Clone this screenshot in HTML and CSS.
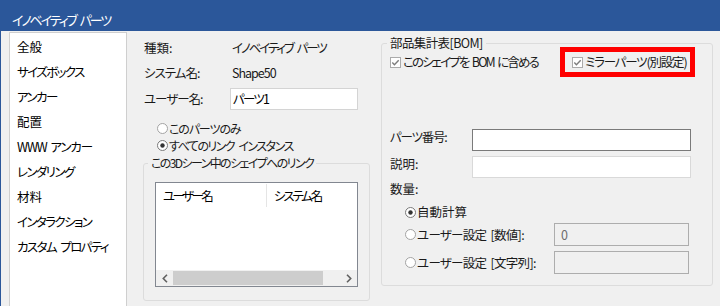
FILE: index.html
```html
<!DOCTYPE html>
<html lang="ja">
<head>
<meta charset="utf-8">
<link rel="stylesheet" href="styles.css">
</head>
<body>
<div class="window">
  <div class="titlebar">イノベイティブ パーツ</div>
  <div class="content">
    <ul class="nav">
      <li class="n">全般</li>
      <li class="k">サイズボックス</li>
      <li class="k">アンカー</li>
      <li class="n">配置</li>
      <li class="www">WWW アンカー</li>
      <li class="k">レンダリング</li>
      <li class="n">材料</li>
      <li class="k">インタラクション</li>
      <li class="k">カスタム プロパティ</li>
    </ul>
    <div class="main">
      <div class="leftcol">
        <div class="row r1"><span class="lbl n">種類:</span><span class="val kv">イノベイティブ パーツ</span></div>
        <div class="row r2"><span class="lbl">システム名:</span><span class="val">Shape50</span></div>
        <div class="row r3"><span class="lbl">ユーザー名:</span><span class="input name">パーツ1</span></div>
        <div class="radios">
          <div class="radio rr1"><svg class="rb" width="11" height="11" viewBox="0 0 11 11"><circle cx="5.5" cy="5.5" r="5" fill="#fff" stroke="#a3a3a3"/></svg><span class="ra">このパーツのみ</span></div>
          <div class="radio rr2"><svg class="rb" width="11" height="11" viewBox="0 0 11 11"><circle cx="5.5" cy="5.5" r="5" fill="#fff" stroke="#7a7a7a"/><circle cx="5.5" cy="5.5" r="2.2" fill="#333"/></svg><span class="rb2">すべてのリンク インスタンス</span></div>
        </div>
        <fieldset class="group links">
          <legend>この3Dシーン中のシェイプへのリンク</legend>
          <div class="listview">
            <div class="lvhead">
              <span class="col c1">ユーザー名</span>
              <span class="col c2">システム名</span>
            </div>
            <div class="lvbody"></div>
            <div class="hscroll">
              <span class="sbtn"><svg width="6" height="9" viewBox="0 0 6 9"><path d="M5 0.8 L1.3 4.5 L5 8.2" fill="none" stroke="#606060" stroke-width="1.6"/></svg></span>
              <span class="thumb"></span>
              <span class="track"></span>
              <span class="sbtn"><svg width="6" height="9" viewBox="0 0 6 9"><path d="M1 0.8 L4.7 4.5 L1 8.2" fill="none" stroke="#606060" stroke-width="1.6"/></svg></span>
            </div>
          </div>
        </fieldset>
      </div>
      <fieldset class="group bom">
        <legend class="bl">部品集計表[BOM]</legend>
        <div class="checkrow">
          <label class="check"><svg class="cb" width="11" height="11" viewBox="0 0 11 11"><rect x="0.5" y="0.5" width="10" height="10" fill="#fff" stroke="#ababab"/><path d="M2.3 5.6 L4.4 7.7 L8.7 3.2" fill="none" stroke="#7d7d7d" stroke-width="1.4"/></svg><span class="ct">このシェイプを BOM に含める</span></label>
          <label class="check mirror"><svg class="cb" width="11" height="11" viewBox="0 0 11 11"><rect x="0.5" y="0.5" width="10" height="10" fill="#fff" stroke="#ababab"/><path d="M2.3 5.6 L4.4 7.7 L8.7 3.2" fill="none" stroke="#7d7d7d" stroke-width="1.4"/></svg><span class="mt">ミラーパーツ(別設定)</span></label>
        </div>
        <div class="frow partno"><span class="flbl pn">パーツ番号:</span><span class="input wide dark"></span></div>
        <div class="frow desc"><span class="flbl n">説明:</span><span class="input wide"></span></div>
        <div class="qty n">数量:</div>
        <div class="radio qr auto"><svg class="rb" width="11" height="11" viewBox="0 0 11 11"><circle cx="5.5" cy="5.5" r="5" fill="#fff" stroke="#7a7a7a"/><circle cx="5.5" cy="5.5" r="2.2" fill="#333"/></svg><span class="n">自動計算</span></div>
        <div class="radio qr user1"><svg class="rb" width="11" height="11" viewBox="0 0 11 11"><circle cx="5.5" cy="5.5" r="5" fill="#fff" stroke="#a3a3a3"/></svg><span class="qlbl">ユーザー設定 [数値]:</span><span class="input disabled">0</span></div>
        <div class="radio qr user2"><svg class="rb" width="11" height="11" viewBox="0 0 11 11"><circle cx="5.5" cy="5.5" r="5" fill="#fff" stroke="#a3a3a3"/></svg><span class="qlbl">ユーザー設定 [文字列]:</span><span class="input disabled"></span></div>
      </fieldset>
    </div>
  </div>
</div>
</body>
</html>
```
FILE: styles.css
```css
* { box-sizing: border-box; }
html, body { margin: 0; padding: 0; }
body {
  width: 720px;
  height: 306px;
  overflow: hidden;
  font-family: "Noto Sans CJK JP", "Noto Sans", sans-serif;
  font-size: 12.5px;
  line-height: 16px;
  letter-spacing: -1px;
  word-spacing: 2px;
  font-feature-settings: "palt" 1;
  color: #1a1a1a;
  background: #f0f0f0;
}
.k { letter-spacing: -1.6px; word-spacing: 3px; }
.kv { letter-spacing: -2.1px; word-spacing: 3px; }
.n { letter-spacing: 0; }
.www { letter-spacing: -1.1px; }
.window {
  width: 720px;
  height: 306px;
  border-left: 1px solid #2b579a;
  background: #f0f0f0;
  display: flex;
  flex-direction: column;
  overflow: hidden;
}
.titlebar {
  height: 31px;
  flex: none;
  background: #2b579a;
  color: #fff;
  font-size: 13px;
  letter-spacing: -2.1px;
  word-spacing: 3px;
  line-height: 25px;
  padding: 7px 0 0 11px;
  display: flex;
  align-items: center;
}
.content {
  flex: 1;
  display: flex;
  align-items: flex-start;
  padding: 1px 0 0 8px;
  min-height: 0;
}
.nav {
  list-style: none;
  margin: 0;
  padding: 1px 0 0 7px;
  width: 118px;
  height: 290px;
  flex: none;
  background: #fff;
  border: 1px solid #cfcfcf;
  color: #000;
}
.nav li {
  height: 25px;
  line-height: 25px;
  white-space: nowrap;
}
.main {
  display: flex;
  align-items: flex-start;
  padding-left: 16px;
  gap: 11px;
}
.leftcol {
  width: 227px;
  display: flex;
  flex-direction: column;
  padding-top: 4px;
}
.row { display: flex; align-items: center; }
.r1 { height: 24px; }
.r2 { height: 25px; }
.r3 { height: 22px; margin-top: 3px; }
.lbl { width: 87px; padding-left: 1px; white-space: nowrap; }
.val { padding-left: 2px; white-space: nowrap; color: #1a1a1a; }
.input {
  display: flex;
  align-items: center;
  height: 22px;
  background: #fff;
  border: 1px solid #d4d4d4;
  padding-left: 3px;
  color: #000;
  flex: none;
}
.input.name { width: 128px; letter-spacing: -1.8px; padding-left: 2px; }
.radios { margin-top: 10px; padding-left: 14px; font-size: 12px; }
.radio { display: flex; align-items: center; white-space: nowrap; }
.rb { flex: none; margin-right: 1px; }
.ra { letter-spacing: -1.1px; }
.rb2 { letter-spacing: -1.5px; word-spacing: 3px; }
.rr1 { height: 17px; }
.rr2 { height: 17px; }
.group {
  margin: 0;
  border: 1px solid #dcdcdc;
  border-radius: 3px;
  min-width: 0;
}
.group legend {
  line-height: 14px;
  padding: 0 3px;
  white-space: nowrap;
}
.links {
  width: 227px;
  margin-top: 2px;
  padding: 12px 11px 13px 11px;
}
.links legend { margin-left: -7px; font-size: 12px; letter-spacing: -1.6px; }
.listview {
  width: 203px;
  height: 105px;
  background: #fff;
  border: 1px solid #828790;
  display: flex;
  flex-direction: column;
}
.lvhead { display: flex; height: 24px; margin-top: 1px; flex: none; }
.col {
  height: 23px;
  padding-top: 2px;
  line-height: 20px;
  color: #000;
}
.c1 { width: 110px; padding-left: 7px; letter-spacing: -2.6px; }
.c2 { border-left: 1px solid #e5e5e5; padding-left: 7px; flex: 1; letter-spacing: -2.2px; }
.lvbody { flex: 1; }
.hscroll {
  height: 16px;
  flex: none;
  display: flex;
  align-items: stretch;
  background: #f0f0f0;
}
.sbtn {
  width: 17px;
  display: flex;
  align-items: center;
  justify-content: center;
  flex: none;
}
.thumb {
  width: 150px;
  background: #cdcdcd;
  margin: 1px 0;
  flex: none;
}
.track { flex: 1; }
.bom {
  width: 332px;
  margin-top: 4px;
  padding: 2px 8px 11px 8px;
}
.bom legend.bl { margin-left: -3px; letter-spacing: -0.6px; }
.checkrow {
  display: flex;
  align-items: center;
  height: 20px;
}
.check {
  display: flex;
  align-items: center;
  white-space: nowrap;
  gap: 2px;
}
.cb { flex: none; }
.ct { letter-spacing: -1.9px; word-spacing: 2.5px; }
.mt { letter-spacing: -1.2px; }
.mirror {
  width: 125px;
  height: 20px;
  padding-left: 7px;
  margin-left: auto;
  margin-right: 14px;
  outline: 5px solid #ff0000;
}
.frow { display: flex; align-items: flex-start; }
.partno { margin-top: 57px; }
.desc { margin-top: 5px; }
.flbl { width: 82px; line-height: 16px; padding-left: 0; white-space: nowrap; }
.pn { letter-spacing: -1.2px; }
.input.wide { width: 219px; height: 22px; border-color: #d9d9d9; }
.input.wide.dark { border-color: #7a7a7a; }
.qty { margin-top: 3px; line-height: 16px; }
.qr { padding-left: 15px; }
.auto { height: 18px; margin-top: 6px; }
.user1 { height: 23px; margin-top: 2px; }
.user2 { height: 23px; margin-top: 5px; }
.qlbl { width: 137px; letter-spacing: -0.7px; word-spacing: 2px; }
.input.disabled {
  width: 135px;
  height: 23px;
  background: #f0f0f0;
  border-color: #adadad;
  color: #6d6d6d;
  padding-left: 6px;
}
```
